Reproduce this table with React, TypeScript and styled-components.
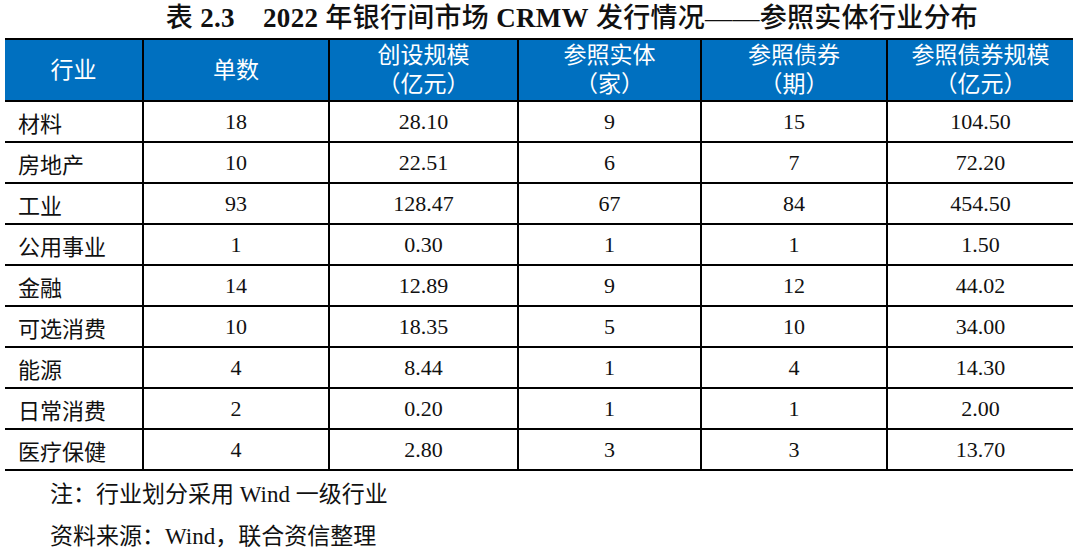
import React from 'react';
import styled, { createGlobalStyle } from 'styled-components';

const GlobalStyle = createGlobalStyle`
  html, body {
    margin: 0;
    padding: 0;
    background: #ffffff;
  }
  body {
    font-family: "Liberation Serif", "Noto Sans CJK SC", serif;
    color: #111;
  }
`;

const Page = styled.div`
  width: 1080px;
  height: 553px;
  overflow: hidden;
  padding: 0 7px 0 5px;
  box-sizing: border-box;
`;

const Title = styled.h1`
  margin: 0;
  height: 38px;
  line-height: 37px;
  text-align: center;
  font-size: 27px;
  font-weight: 500;
  white-space: pre;
  padding-left: 66px;
  letter-spacing: 0.3px;
`;

const Latin = styled.span`
  font-weight: bold;
`;

const Roman = styled.span`
  font-family: "Liberation Serif", serif;
`;

const Table = styled.table`
  width: 1068px;
  border-collapse: collapse;
  table-layout: fixed;
  font-size: 22px;
`;

const HeadCell = styled.th`
  background: #0070c0;
  color: #fff;
  font-weight: normal;
  font-size: 23px;
  height: 60px;
  padding: 0;
  line-height: 29px;
  text-align: center;
  border-top: 2px solid #000;
  border-bottom: 2px solid #000;
  border-left: 2px solid #000;
  &:first-child {
    border-left: none;
  }
`;

const Cell = styled.td<{ $left?: boolean }>`
  height: 39px;
  padding: ${({ $left }) => ($left ? '0 0 0 13px' : '0')};
  text-align: ${({ $left }) => ($left ? 'left' : 'center')};
  border-bottom: 2px solid #000;
  border-left: 2px solid #000;
  &:first-child {
    border-left: none;
  }
`;

const Notes = styled.div`
  padding-left: 45px;
  font-size: 23px;
  line-height: 42px;
  margin-top: 3px;
`;

const columns: { label: string; sub?: string; width: number }[] = [
  { label: '行业', width: 138 },
  { label: '单数', width: 186 },
  { label: '创设规模', sub: '（亿元）', width: 189 },
  { label: '参照实体', sub: '（家）', width: 183 },
  { label: '参照债券', sub: '（期）', width: 186 },
  { label: '参照债券规模', sub: '（亿元）', width: 186 },
];

const rows: string[][] = [
  ['材料', '18', '28.10', '9', '15', '104.50'],
  ['房地产', '10', '22.51', '6', '7', '72.20'],
  ['工业', '93', '128.47', '67', '84', '454.50'],
  ['公用事业', '1', '0.30', '1', '1', '1.50'],
  ['金融', '14', '12.89', '9', '12', '44.02'],
  ['可选消费', '10', '18.35', '5', '10', '34.00'],
  ['能源', '4', '8.44', '1', '4', '14.30'],
  ['日常消费', '2', '0.20', '1', '1', '2.00'],
  ['医疗保健', '4', '2.80', '3', '3', '13.70'],
];

export default function App() {
  return (
    <Page>
      <GlobalStyle />
      <Title>
        表 <Latin>2.3    2022</Latin> 年银行间市场 <Latin>CRMW</Latin> 发行情况——参照实体行业分布
      </Title>
      <Table>
        <colgroup>
          {columns.map((c) => (
            <col key={c.label} style={{ width: c.width }} />
          ))}
        </colgroup>
        <thead>
          <tr>
            {columns.map((c) => (
              <HeadCell key={c.label}>
                {c.label}
                {c.sub && (
                  <>
                    <br />
                    {c.sub}
                  </>
                )}
              </HeadCell>
            ))}
          </tr>
        </thead>
        <tbody>
          {rows.map((r) => (
            <tr key={r[0]}>
              {r.map((v, i) => (
                <Cell key={i} $left={i === 0}>
                  {v}
                </Cell>
              ))}
            </tr>
          ))}
        </tbody>
      </Table>
      <Notes>
        <div>
          注：行业划分采用<Roman> Wind </Roman>一级行业
        </div>
        <div>
          资料来源：<Roman>Wind</Roman>，联合资信整理
        </div>
      </Notes>
    </Page>
  );
}
